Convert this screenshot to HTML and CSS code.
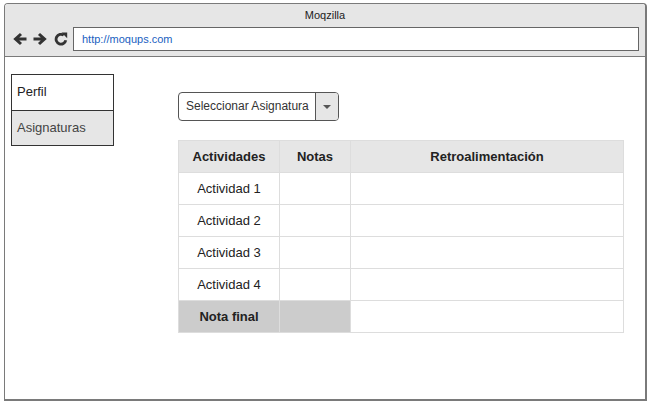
FILE: index.html
```html
<!DOCTYPE html>
<html lang="es">
<head>
<meta charset="utf-8">
<title>Moqzilla</title>
<link rel="stylesheet" href="styles.css">
</head>
<body>
<div class="window">
  <div class="chrome">
    <div class="title">Moqzilla</div>
    <div class="toolbar">
      <svg class="icon" width="16" height="16" viewBox="0 0 16 16"><path d="M14.5 8H4M9 3L3.5 8 9 13" fill="none" stroke="#333" stroke-width="3"/></svg>
      <svg class="icon" width="16" height="16" viewBox="0 0 16 16"><path d="M1.5 8H12M7 3l5.5 5L7 13" fill="none" stroke="#333" stroke-width="3"/></svg>
      <svg class="icon reload" width="14" height="14" viewBox="0 0 14 14"><path d="M11.8 8.2A4.9 4.9 0 1 1 9.8 3.2" fill="none" stroke="#333" stroke-width="2.8"/><path d="M7.5 0.5L13.2 0.5 13.2 6.2z" fill="#333"/></svg>
      <div class="address">http://moqups.com</div>
    </div>
  </div>
  <div class="content">
    <nav class="sidenav">
      <div class="nav-item">Perfil</div>
      <div class="nav-item active">Asignaturas</div>
    </nav>
    <main class="main">
      <div class="select">
        <span class="select-label">Seleccionar Asignatura</span>
        <span class="select-btn"><span class="caret"></span></span>
      </div>
      <table class="grades">
        <thead>
          <tr><th class="c1">Actividades</th><th class="c2">Notas</th><th class="c3">Retroalimentación</th></tr>
        </thead>
        <tbody>
          <tr><td>Actividad 1</td><td></td><td></td></tr>
          <tr><td>Actividad 2</td><td></td><td></td></tr>
          <tr><td>Actividad 3</td><td></td><td></td></tr>
          <tr><td>Actividad 4</td><td></td><td></td></tr>
          <tr class="final"><td class="grey">Nota final</td><td class="grey"></td><td></td></tr>
        </tbody>
      </table>
    </main>
  </div>
</div>
</body>
</html>
```
FILE: styles.css
```css
* { box-sizing: border-box; }
html, body { margin: 0; padding: 0; background: #fff; }
body {
  font-family: "Liberation Sans", Arial, sans-serif;
  font-size: 13px;
  color: #222;
  padding: 3px 0 0 4px;
}
.window {
  width: 643px;
  height: 398px;
  border: 1px solid #7a7a7a;
  border-right-width: 2px;
  border-bottom-width: 2px;
  border-radius: 4px 4px 0 0;
  display: flex;
  flex-direction: column;
  background: #fff;
}
.chrome {
  background: #e6e6e6;
  border-bottom: 1px solid #7a7a7a;
  height: 53px;
  border-radius: 3px 3px 0 0;
}
.title {
  text-align: center;
  font-size: 11px;
  color: #222;
  height: 23px;
  padding-top: 5px;
}
.toolbar {
  display: flex;
  align-items: center;
  padding-left: 7px;
}
.icon { display: block; margin-right: 4px; }
.reload { margin-left: 2px; margin-right: 5px; }
.address {
  flex: 1;
  margin-right: 6px;
  height: 24px;
  border: 1px solid #666;
  background: #fff;
  color: #1a5fbf;
  font-size: 11px;
  line-height: 22px;
  padding-left: 8px;
}
.content {
  flex: 1;
  display: flex;
  align-items: flex-start;
  padding: 17px 0 0 6px;
}
.sidenav {
  width: 103px;
  border: 1px solid #333;
}
.nav-item {
  height: 35px;
  line-height: 34px;
  padding-left: 5px;
  font-size: 13px;
  color: #222;
  background: #fff;
}
.nav-item + .nav-item { border-top: 1px solid #333; }
.nav-item.active { background: #e6e6e6; color: #444; }
.main {
  margin-left: 64px;
  padding-top: 18px;
}
.select {
  display: inline-flex;
  height: 29px;
  border: 1px solid #555;
  border-radius: 4px;
  overflow: hidden;
}
.select-label {
  width: 137px;
  padding-left: 7px;
  line-height: 27px;
  font-size: 12px;
  white-space: nowrap;
  color: #333;
  border-right: 1px solid #555;
}
.select-btn {
  width: 22px;
  background: #e6e6e6;
  display: flex;
  align-items: center;
  justify-content: center;
}
.caret {
  width: 0; height: 0;
  border-left: 4px solid transparent;
  border-right: 4px solid transparent;
  border-top: 4px solid #555;
}
.grades {
  margin-top: 19px;
  border-collapse: collapse;
  width: 446px;
  table-layout: fixed;
}
.grades th, .grades td {
  border: 1px solid #ddd;
  height: 32px;
  padding: 0;
  text-align: center;
  font-size: 13px;
}
.grades th {
  background: #e6e6e6;
  font-weight: bold;
  color: #222;
}
.grades td { color: #222; }
.c1 { width: 101px; }
.c2 { width: 71px; }
.grades td.grey { background: #cccccc; font-weight: bold; }
```
